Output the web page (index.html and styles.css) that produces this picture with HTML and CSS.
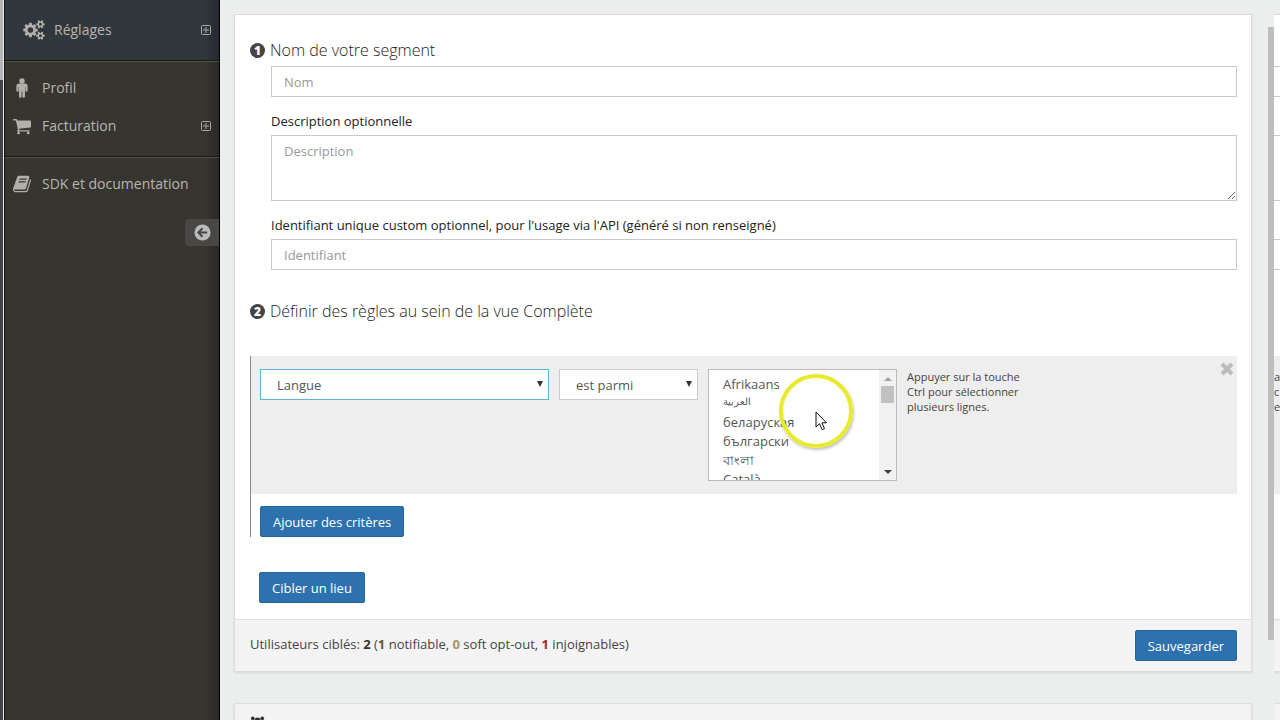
FILE: index.html
```html
<!DOCTYPE html>
<html lang="fr">
<head>
    <meta charset="UTF-8">
    <meta name="viewport" content="width=device-width, initial-scale=1.0">
    <title>Nouveau segment</title>
    <link rel="stylesheet" href="styles.css">
</head>
<body>
    <div class="window-edge"></div>

    <nav class="sidebar">
        <ul class="menu submenu">
            <li>
                <a href="#">
                    <svg class="icon icon-cogs" viewBox="0 0 1920 1792"><path d="M896 896q0-106-75-181t-181-75-181 75-75 181 75 181 181 75 181-75 75-181zm768 512q0-52-38-90t-90-38-90 38-38 90q0 53 37.500 90.500t90.500 37.500 90.500-37.500 37.500-90.500zm0-1024q0-52-38-90t-90-38-90 38-38 90q0 53 37.500 90.500t90.500 37.500 90.500-37.500 37.500-90.500zm-384 421v185q0 10-7 19.500t-16 10.500l-155 24q-11 35-32 76 34 48 90 115 7 11 7 20 0 12-7 19-23 30-82.500 89.500t-78.500 59.500q-11 0-21-7l-115-90q-37 19-77 31-11 108-23 155-7 24-30 24h-186q-11 0-20-7.500t-10-17.500l-23-153q-34-10-75-31l-118 89q-7 7-20 7-11 0-21-8-144-133-144-160 0-9 7-19 10-14 41-53t47-61q-23-44-35-82l-152-24q-10-1-17-9.500t-7-19.500v-185q0-10 7-19.500t16-10.500l155-24q11-35 32-76-34-48-90-115-7-11-7-20 0-12 7-20 22-30 82-89t79-59q11 0 21 7l115 90q34-18 77-32 11-108 23-154 7-24 30-24h186q11 0 20 7.500t10 17.500l23 153q34 10 75 31l118-89q8-7 20-7 11 0 21 8 144 133 144 160 0 8-7 19-12 16-42 54t-45 60q23 48 34 82l152 23q10 2 17 10.500t7 19.500zm640 533v140q0 16-149 31-12 27-30 52 51 113 51 138 0 4-4 7-122 71-124 71-8 0-46-47t-52-68q-20 2-30 2t-30-2q-14 21-52 68t-46 47q-2 0-124-71-4-3-4-7 0-25 51-138-18-25-30-52-149-15-149-31v-140q0-16 149-31 13-29 30-52-51-113-51-138 0-4 4-7 4-2 35-20t59-34 30-16q8 0 46 46.500t52 67.500q20-2 30-2t30 2q51-71 92-112l6-2q4 0 124 70 4 3 4 7 0 25-51 138 17 23 30 52 149 15 149 31zm0-1024v140q0 16-149 31-12 27-30 52 51 113 51 138 0 4-4 7-122 71-124 71-8 0-46-47t-52-68q-20 2-30 2t-30-2q-14 21-52 68t-46 47q-2 0-124-71-4-3-4-7 0-25 51-138-18-25-30-52-149-15-149-31v-140q0-16 149-31 13-29 30-52-51-113-51-138 0-4 4-7 4-2 35-20t59-34 30-16q8 0 46 46.500t52 67.500q20-2 30-2t30 2q51-71 92-112l6-2q4 0 124 70 4 3 4 7 0 25-51 138 17 23 30 52 149 15 149 31z"/></svg>
                    <span>Réglages</span>
                    <svg class="expand" viewBox="0 0 10 10"><rect x="0.500" y="0.500" width="9" height="9" rx="1"/><path d="M5 2v6M2 5h6"/></svg>
                </a>
            </li>
        </ul>
        <ul class="menu">
            <li>
                <a href="#">
                    <svg class="icon" viewBox="0 0 18 20"><circle cx="9" cy="3" r="2.700"/><path d="M6 5.500h6q2.600 0 2.600 2.700v4.300q0 1.200-1.100 1.200t-1.100-1.200V9H12v9.400q0 1.300-1.300 1.300t-1.300-1.300V13.500h-.8v4.900q0 1.300-1.300 1.300T6 18.400V9h-.4v3.500q0 1.200-1.100 1.200t-1.100-1.200V8.200Q3.400 5.500 6 5.500z"/></svg>
                    <span>Profil</span>
                </a>
            </li>
            <li>
                <a href="#">
                    <svg class="icon" viewBox="0 0 1664 1792"><path d="M640 1536q0 52-38 90t-90 38-90-38-38-90 38-90 90-38 90 38 38 90zm896 0q0 52-38 90t-90 38-90-38-38-90 38-90 90-38 90 38 38 90zm128-1088v512q0 24-16.500 42.500t-40.500 21.500l-1044 122q13 60 13 70 0 16-24 64h920q26 0 45 19t19 45-19 45-45 19h-1024q-26 0-45-19t-19-45q0-11 8-31.500t16-36 21.500-40 15.500-29.500l-177-823h-204q-26 0-45-19t-19-45 19-45 45-19h256q16 0 28.500 6.500t19.500 15.500 13 24.500 8 26 5.500 29.500 4.500 26h1201q26 0 45 19t19 45z"/></svg>
                    <span>Facturation</span>
                    <svg class="expand" viewBox="0 0 10 10"><rect x="0.500" y="0.500" width="9" height="9" rx="1"/><path d="M5 2v6M2 5h6"/></svg>
                </a>
            </li>
        </ul>
        <ul class="menu">
            <li>
                <a href="#">
                    <svg class="icon" viewBox="0 0 1664 1792"><path d="M1639 478q40 57 18 129l-275 906q-19 64-76.500 107.500t-122.500 43.500h-923q-77 0-148.500-53.500t-99.500-131.500q-24-67-2-127 0-4 3-27t4-37q1-8-3-21.500t-3-19.500q2-11 8-21t16.500-23.500 16.500-23.500q23-38 45-91.500t30-91.500q3-10 .5-30t-.5-28q3-11 17-28t17-23q21-36 42-92t25-90q1-9-2.500-32t.5-28q4-13 22-30.500t22-22.500q19-26 42.500-84.500t27.500-96.500q1-8-3-25.500t-2-26.500q2-8 9-18t18-23 17-21q8-12 16.500-30.500t15-35 16-36 19.500-32 26.500-23.500 36-11.500 47.500 5.500l-1 3q38-9 51-9h761q74 0 114 56t18 130l-274 906q-36 119-71.500 153.500t-128.500 34.500h-869q-27 0-38 15-11 16-1 43 24 70 144 70h923q29 0 56-15.500t35-41.500l300-987q7-22 5-57 38 15 59 43zm-1064 2q-4 13 2 22.500t20 9.500h608q13 0 25.500-9.500t16.500-22.500l21-64q4-13-2-22.500t-20-9.500h-608q-13 0-25.500 9.500t-16.500 22.500zm-83 256q-4 13 2 22.500t20 9.500h608q13 0 25.500-9.500t16.500-22.500l21-64q4-13-2-22.500t-20-9.500h-608q-13 0-25.500 9.500t-16.500 22.500z"/></svg>
                    <span>SDK et documentation</span>
                </a>
            </li>
        </ul>
        <button class="collapse" type="button" aria-label="Réduire le menu">
            <svg viewBox="0 0 18 18"><circle cx="9" cy="9" r="8.500"/><path d="M14 9H5M9 4.500L4.500 9L9 13.500"/></svg>
        </button>
    </nav>

    <main class="content">
        <form class="panel">
            <div class="panel-body">
                <h2 class="step"><span class="step-number">1</span>Nom de votre segment</h2>
                <div class="fields">
                    <input type="text" id="name" placeholder="Nom" aria-label="Nom de votre segment">
                    <label for="description">Description optionnelle</label>
                    <textarea id="description" placeholder="Description"></textarea>
                    <label for="identifier">Identifiant unique custom optionnel, pour l'usage via l'API (généré si non renseigné)</label>
                    <input type="text" id="identifier" placeholder="Identifiant">
                </div>

                <h2 class="step"><span class="step-number">2</span>Définir des règles au sein de la vue Complète</h2>
                <div class="rules">
                    <div class="rule">
                        <div class="dropdown dropdown-field">
                            <select aria-label="Critère"><option>Langue</option></select>
                        </div>
                        <div class="dropdown dropdown-operator">
                            <select aria-label="Opérateur"><option>est parmi</option></select>
                        </div>
                        <div class="listbox">
                            <select multiple size="6" aria-label="Langues">
                                <option>Afrikaans</option>
                                <option class="arabic">العربية</option>
                                <option>беларуская</option>
                                <option>български</option>
                                <option>বাংলা</option>
                                <option>Català</option>
                            </select>
                            <div class="listbox-scroll">
                                <i class="scroll-up"></i>
                                <i class="scroll-thumb"></i>
                                <i class="scroll-down"></i>
                            </div>
                            <div class="pointer">
                                <svg viewBox="0 0 12 20"><path d="M1 1v15l3.500-3.300 2.600 6 2.400-1-2.600-5.900H11.500z"/></svg>
                            </div>
                        </div>
                        <p class="hint">Appuyer sur la touche Ctrl pour sélectionner plusieurs lignes.</p>
                        <button class="remove" type="button" aria-label="Supprimer">
                            <svg viewBox="0 0 14 14"><path d="M2 2l10 10M12 2L2 12"/></svg>
                        </button>
                    </div>
                    <button class="btn" type="button">Ajouter des critères</button>
                </div>
                <div class="place">
                    <button class="btn" type="button">Cibler un lieu</button>
                </div>
            </div>
            <div class="panel-footer">
                <p>Utilisateurs ciblés: <b>2</b> (<b class="reachable">1</b> notifiable, <b class="soft">0</b> soft opt-out, <b class="unreachable">1</b> injoignables)</p>
                <button class="btn" type="submit">Sauvegarder</button>
            </div>
        </form>

        <section class="panel panel-next">
            <svg class="users" viewBox="0 0 16 16"><circle cx="3" cy="3" r="2"/><circle cx="13" cy="3" r="2"/><circle cx="8" cy="5" r="3"/><path d="M0 9q0-4 3-4l2 3-2 3H1zM16 9q0-4-3-4l-2 3 2 3h2zM3 14q0-6 5-6t5 6z"/></svg>
        </section>
    </main>

    <div class="page-scroll"><div class="page-scroll-thumb"></div></div>

    <div class="overflow-strip">
        <div class="panel">
            <div class="panel-body">
                <div class="ghost"></div>
                <div class="ghost ghost-description"></div>
                <div class="ghost"></div>
                <div class="ghost-rule">a<br>c<br>e</div>
            </div>
            <div class="panel-footer"></div>
        </div>
        <div class="panel panel-next"></div>
    </div>
</body>
</html>
```

FILE: styles.css
```css
* {
    box-sizing: border-box;
}

body {
    display: flex;
    height: 100vh;
    margin: 0;
    overflow: hidden;
    font-family: "Open Sans", "Noto Sans", sans-serif;
    font-size: 13px;
    line-height: 20px;
    color: #444;
    background-color: #eceeed;
}

h2, p, ul {
    margin: 0;
    padding: 0;
    font-weight: 400;
}

button, input, select, textarea {
    font-family: inherit;
    font-size: 13px;
}

/* Sidebar */

.window-edge {
    flex: none;
    width: 4px;
    border-right: 1px solid #eee;
    background: linear-gradient(#b5b5b8 0, #b5b5b8 80px, #414148 80px);
}

.sidebar {
    flex: none;
    width: 216px;
    border-left: 1px solid #111;
    border-right: 1px solid #000;
    background: linear-gradient(to left, #2a2926, #373530 14px);
}

.menu {
    list-style: none;
    padding: 7px 0 11px;
    border-top: 1px solid #55534e;
    border-bottom: 1px solid #161512;
}

.menu:last-of-type {
    border-bottom: none;
}

.submenu {
    padding: 11px 0;
    border-top: none;
    background: linear-gradient(to left, #22282c, #31383d 14px);
}

.menu a {
    display: flex;
    align-items: center;
    height: 38px;
    padding: 0 8px;
    font-size: 14px;
    color: #b8b5b0;
    text-decoration: none;
}

.submenu a {
    padding-left: 18px;
}

.icon {
    width: 18px;
    height: 20px;
    margin-right: 11px;
    fill: #b3b0ac;
}

.icon-cogs {
    width: 22px;
    margin-right: 9px;
}

.expand {
    width: 10px;
    height: 10px;
    margin-left: auto;
    fill: none;
    stroke: #aaa7a2;
}

.collapse {
    display: block;
    width: 34px;
    height: 27px;
    margin: 5px 0 0 auto;
    padding: 5px 9px;
    border: none;
    border-radius: 4px 0 0 4px;
    background-color: #484746;
}

.collapse svg {
    display: block;
    width: 17px;
    height: 17px;
    fill: #bbb;
    stroke: #484746;
    stroke-width: 2;
}

.collapse circle {
    stroke: none;
}

/* Segment form */

.content {
    flex: 1;
    min-width: 0;
    padding: 14px 16px 0 14px;
}

.panel {
    border: 1px solid #dcdcdc;
    background-color: #fff;
    box-shadow: 0 1px 2px rgba(0, 0, 0, 0.1);
}

.panel-body {
    padding: 23px 14px 16px 15px;
}

.panel-next {
    height: 60px;
    margin-top: 31px;
    padding: 11px 15px;
    background-color: #f3f3f3;
}

.users {
    width: 15px;
    height: 16px;
    fill: #333;
}

.step {
    display: flex;
    align-items: center;
    gap: 5px;
    height: 24px;
    font-size: 16px;
    font-weight: 300;
    color: #222;
}

.step-number {
    width: 15px;
    height: 15px;
    border-radius: 50%;
    font-size: 12px;
    font-weight: 800;
    line-height: 15px;
    text-align: center;
    color: #fff;
    background-color: #444;
}

.fields {
    display: flex;
    flex-direction: column;
    margin: 4px 0 29px 21px;
}

.fields label {
    margin: 14px 0 4px;
    color: #222;
}

.fields input, .fields textarea {
    width: 100%;
    height: 31px;
    padding: 5px 12px;
    border: 1px solid #c8c8c8;
    background-color: #fff;
}

.fields textarea {
    height: 66px;
    line-height: 20px;
    resize: vertical;
}

.fields ::placeholder {
    color: #999;
}

.rules {
    margin-top: 33px;
    border-left: 1px solid #888;
}

.rule {
    display: flex;
    align-items: flex-start;
    gap: 10px;
    margin-bottom: 12px;
    padding: 13px 0 13px 9px;
    background-color: #eee;
}

.rules > .btn {
    margin-left: 9px;
}

.dropdown {
    position: relative;
}

.dropdown::after {
    content: "";
    position: absolute;
    top: 12px;
    right: 6px;
    border: 3px solid transparent;
    border-top: 6px solid #333;
    border-bottom: none;
}

.dropdown select {
    appearance: none;
    display: block;
    width: 100%;
    height: 31px;
    padding: 1px 16px 0;
    border: 1px solid #ccc;
    border-radius: 0;
    color: #555;
    background-color: #fff;
}

.dropdown-field {
    width: 289px;
}

.dropdown-operator {
    width: 139px;
}

.dropdown-field select {
    border-color: #66afd6;
}

.listbox {
    position: relative;
    display: flex;
    width: 189px;
    height: 112px;
    border: 1px solid #bbb;
    background-color: #fff;
}

.listbox select {
    flex: 1;
    height: 110px;
    padding: 5px 12px 0;
    border: none;
    outline: none;
    overflow: hidden;
    background-color: #fff;
}

.listbox option {
    height: 19px;
    min-height: 0;
    padding: 0 2px;
    line-height: 19px;
    color: #555;
}

.listbox .arabic {
    font-size: 10px;
}

.listbox-scroll {
    display: flex;
    flex-direction: column;
    align-items: center;
    width: 17px;
    padding: 7px 0 6px;
    background-color: #f1f1f1;
}

.scroll-up {
    border: 4px solid transparent;
    border-top: none;
    border-bottom: 4px solid #a3a3a3;
}

.scroll-thumb {
    width: 13px;
    height: 17px;
    margin-top: 5px;
    background-color: #c1c1c1;
}

.scroll-down {
    margin-top: auto;
    border: 4px solid transparent;
    border-top: 4px solid #404040;
    border-bottom: none;
}

/* Click halo and cursor over the list */
.pointer {
    position: absolute;
    top: 4px;
    left: 70px;
    width: 74px;
    height: 74px;
    border: 4px solid #e8eb2d;
    border-radius: 50%;
    box-shadow: 1px 2px 3px rgba(0, 0, 0, 0.25);
}

.pointer svg {
    width: 12px;
    height: 20px;
    margin: 33px 0 0 32px;
    fill: #fff;
    stroke: #111;
}

.hint {
    width: 120px;
    font-size: 11px;
    line-height: 15px;
}

.remove {
    margin: -7px 3px 0 auto;
    padding: 0;
    border: none;
    background: none;
}

.remove svg {
    display: block;
    width: 14px;
    height: 14px;
    stroke: #bbb;
    stroke-width: 4;
}

.btn {
    display: block;
    height: 31px;
    padding: 0 12px;
    border: 1px solid #24659c;
    border-radius: 2px;
    color: #fff;
    background-color: #2d72ae;
}

.place {
    margin: 35px 0 0 9px;
}

.panel-footer {
    display: flex;
    justify-content: space-between;
    height: 52px;
    padding: 10px 14px 10px 15px;
    border-top: 1px solid #ddd;
    background-color: #f3f3f3;
}

.panel-footer p {
    padding-top: 4px;
}

.panel-footer b {
    font-weight: 700;
    color: #333;
}

.panel-footer .reachable {
    color: #55613f;
}

.panel-footer .soft {
    color: #a39667;
}

.panel-footer .unreachable {
    color: #a8262f;
}

/* Page scrollbar */

.page-scroll {
    flex: none;
    width: 6px;
    padding-top: 27px;
}

.page-scroll-thumb {
    height: 613px;
    background-color: #bebebe;
}

/* Neighbouring view, only its left edge is visible */

.overflow-strip {
    flex: none;
    width: 6px;
    padding-top: 14px;
    overflow: hidden;
}

.overflow-strip .panel {
    border-left: none;
    border-right: none;
}

.overflow-strip .panel-body {
    height: 604px;
    padding: 51px 0 0;
}

.overflow-strip .panel-footer, .overflow-strip .panel-next {
    padding: 0;
}

.ghost {
    height: 31px;
    border: 1px solid #c8c8c8;
    border-width: 1px 0;
}

.ghost-description {
    height: 66px;
    margin: 38px 0;
}

.ghost-rule {
    height: 138px;
    margin-top: 86px;
    padding-top: 13px;
    font-size: 11px;
    line-height: 15px;
    background-color: #eee;
}
```
